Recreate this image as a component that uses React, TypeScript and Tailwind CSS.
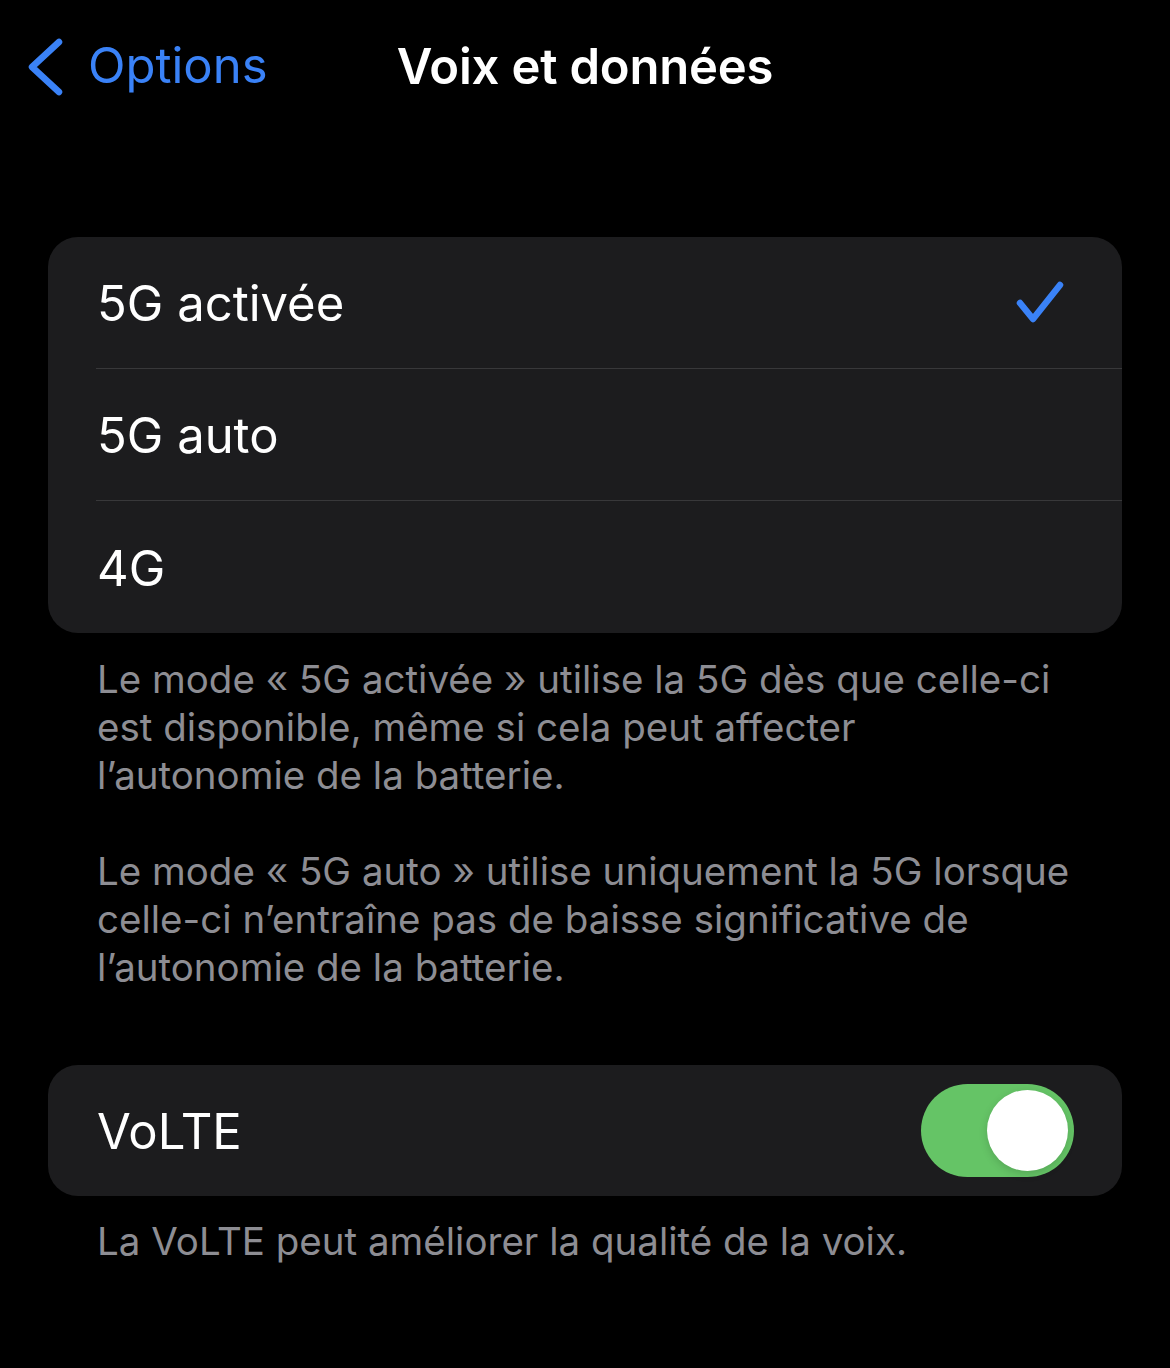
import React, { useState } from 'react';

const font = { fontFamily: 'Inter, "Noto Sans", sans-serif' };

const modes = ['5G activée', '5G auto', '4G'];

function Check() {
  return (
    <svg width="48" height="46" viewBox="0 0 48 46" fill="none">
      <path d="M4 23 L17 39 L44 5" stroke="#3a82f7" strokeWidth="6.5" strokeLinecap="round" strokeLinejoin="round" />
    </svg>
  );
}

function Footer({ lines }: { lines: string[] }) {
  return (
    <p className="pl-[97px] text-[38.5px] leading-[48px] text-[#8d8d93]">
      {lines.map((l, i) => (
        <span key={i} className="block whitespace-nowrap">{l}</span>
      ))}
    </p>
  );
}

export default function App() {
  const [mode, setMode] = useState(0);
  const [volte, setVolte] = useState(true);

  return (
    <div className="w-[1170px] h-[1368px] bg-black text-white overflow-hidden" style={font}>
      <header className="h-[134px] grid grid-cols-[1fr_auto_1fr] items-center">
        <button className="flex items-center pl-[26px] text-[#3a82f7] text-[49px] gap-[24px]">
          <svg width="38" height="58" viewBox="0 0 38 58" fill="none">
            <path d="M33 4 L6 29 L33 54" stroke="#3a82f7" strokeWidth="6.5" strokeLinecap="round" strokeLinejoin="round" />
          </svg>
          <span className="-mt-[2px]">Options</span>
        </button>
        <h1 className="text-[49px] font-semibold tracking-[-0.2px]">Voix et données</h1>
        <div />
      </header>

      <main className="px-[48px] pt-[103px]">
        <div className="bg-[#1c1c1e] rounded-[30px] overflow-hidden">
          {modes.map((m, i) => (
            <div key={m} className="pl-[48px]" onClick={() => setMode(i)}>
              <div className={`h-[132px] flex items-center justify-between pr-[58px] ${i < modes.length - 1 ? 'border-b border-[#38383a]' : ''}`}>
                <span className="pl-[1px] pt-[3px] text-[49px]">{m}</span>
                {mode === i && <Check />}
              </div>
            </div>
          ))}
        </div>
      </main>

      <div className="pt-[22px]">
        <Footer lines={[
          'Le mode « 5G activée » utilise la 5G dès que celle-ci',
          'est disponible, même si cela peut affecter',
          'l’autonomie de la batterie.',
        ]} />
        <div className="h-[48px]" />
        <Footer lines={[
          'Le mode « 5G auto » utilise uniquement la 5G lorsque',
          'celle-ci n’entraîne pas de baisse significative de',
          'l’autonomie de la batterie.',
        ]} />
      </div>

      <div className="px-[48px] pt-[74px]">
        <div className="bg-[#1c1c1e] rounded-[30px] h-[131px] flex items-center justify-between pl-[49px] pr-[48px]">
          <span className="text-[49px] pt-[2px]">VoLTE</span>
          <button
            onClick={() => setVolte(!volte)}
            className={`w-[153px] h-[93px] rounded-full p-[6px] flex ${volte ? 'bg-[#65c466] justify-end' : 'bg-[#39393d] justify-start'}`}
          >
            <span className="w-[81px] h-[81px] rounded-full bg-white shadow-[0_3px_8px_rgba(0,0,0,0.15)]" />
          </button>
        </div>
      </div>

      <div className="pt-[21px]">
        <Footer lines={['La VoLTE peut améliorer la qualité de la voix.']} />
      </div>
    </div>
  );
}
